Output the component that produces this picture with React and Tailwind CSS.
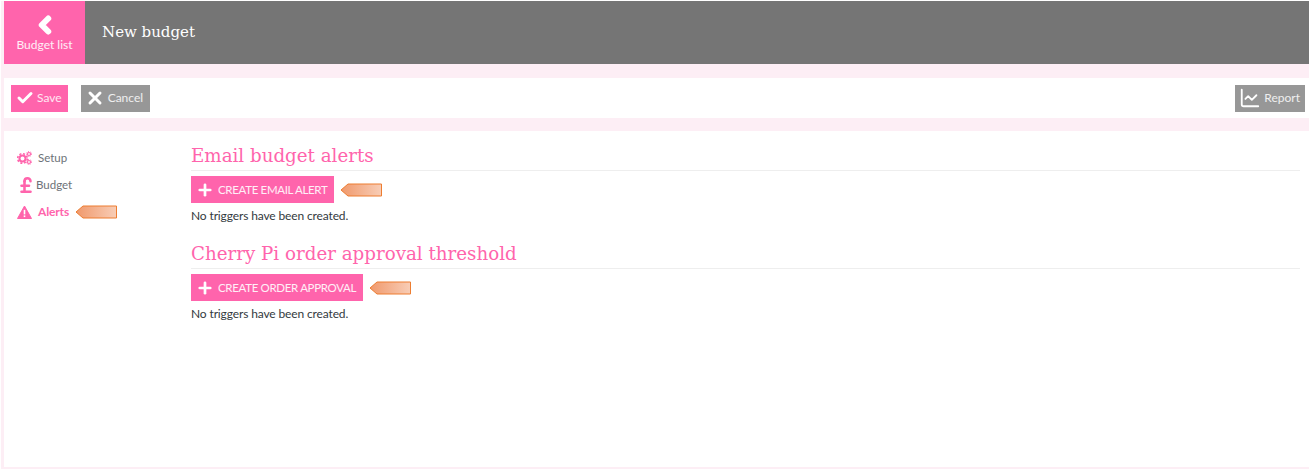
import React from "react";
import { Check, X, Plus, ChevronLeft, LineChart, PoundSterling } from "lucide-react";

const sans = "font-['Lato','Open_Sans',sans-serif]";
const slab = "font-['DejaVu_Serif',serif]";

function Arrow({ className = "" }) {
  return (
    <svg width="43" height="14" viewBox="0 0 43 14" className={className}>
      <defs>
        <linearGradient id="arrowFill" x1="0" x2="1" y1="0" y2="0">
          <stop offset="0" stopColor="#f0996c" />
          <stop offset="1" stopColor="#f8cdb6" />
        </linearGradient>
      </defs>
      <path d="M1 7 L8 1 H41.5 V13 H8 Z" fill="url(#arrowFill)" stroke="#ed7d31" strokeWidth="1" />
    </svg>
  );
}

function GearsIcon() {
  return (
    <svg width="15" height="14" viewBox="0 0 15 14" fill="none" stroke="#ff64ac">
      <circle cx="5.5" cy="7.5" r="3" strokeWidth="2" />
      <circle cx="5.5" cy="7.5" r="4.8" strokeWidth="1.6" strokeDasharray="2 1.77" />
      <circle cx="12" cy="3" r="1.5" strokeWidth="1.2" />
      <circle cx="12" cy="3" r="2.5" strokeWidth="1" strokeDasharray="1 1.1" />
      <circle cx="12" cy="11" r="1.5" strokeWidth="1.2" />
      <circle cx="12" cy="11" r="2.5" strokeWidth="1" strokeDasharray="1 1.1" />
    </svg>
  );
}

function WarningIcon() {
  return (
    <svg width="15" height="14" viewBox="0 0 15 14">
      <path d="M7.5 1 L14.5 13.5 H0.5 Z" fill="#ff64ac" stroke="#ff64ac" strokeWidth="1" strokeLinejoin="round" />
      <rect x="6.7" y="4.8" width="1.6" height="4.6" fill="#ffffff" />
      <rect x="6.7" y="10.4" width="1.6" height="1.7" fill="#ffffff" />
    </svg>
  );
}

function TopButton({ icon, label, pink, className = "" }) {
  return (
    <button className={`flex h-[27px] items-center gap-[3px] text-[12px] text-white/85 ${pink ? "bg-[#ff64ac]" : "bg-[#979797]"} ${className}`}>
      {icon}
      {label}
    </button>
  );
}

function AlertSection({ title, button }) {
  return (
    <section className="mb-[17px]">
      <h2 className={`${slab} border-b border-[#eeeeee] text-[18.25px] leading-[28px] text-[#ff64ac]`}>{title}</h2>
      <div className="mt-[5px] flex items-center gap-[6px]">
        <button className="flex h-[27px] items-center gap-[4px] bg-[#ff64ac] pl-[5px] pr-[7px] text-[11.5px] tracking-[-0.33px] text-white/90">
          <Plus size={18} strokeWidth={3.6} className="text-white" />
          {button}
        </button>
        <Arrow />
      </div>
      <p className="mt-[5px] text-[12px] leading-[15px] tracking-[-0.13px] text-[#333a40]">No triggers have been created.</p>
    </section>
  );
}

function App() {
  return (
    <div className={`${sans} h-[473px] w-[1313px] bg-white pb-[4px] pl-[1px] pr-[4px] pt-[1px]`}>
      <div className="flex h-[468px] flex-col bg-[#fdeef5] pb-[2px] pl-[3px]">
        <header className="flex h-[63px] items-center bg-[#757575]">
          <div className="flex h-full w-[81px] flex-col items-center justify-center bg-[#ff64ac] text-white">
            <ChevronLeft size={26} strokeWidth={5.5} className="-mr-[1px]" />
            <span className="-mt-[1px] text-[12px] leading-[16px] text-white/90">Budget list</span>
          </div>
          <h1 className={`${slab} ml-[17px] text-[15px] text-white`}>New budget</h1>
        </header>

        <div className="mt-[14px] flex h-[40px] items-center justify-between bg-white pl-[7px] pr-[4px]">
          <div className="flex gap-[13px]">
            <TopButton pink label="Save" className="pl-[5px] pr-[6px]" icon={<Check size={18} strokeWidth={4} className="text-white" />} />
            <TopButton label="Cancel" className="pl-[4px] pr-[7px]" icon={<X size={20} strokeWidth={3.6} className="text-white" />} />
          </div>
          <TopButton label="Report" className="pl-[4px] pr-[5px]" icon={<LineChart size={22} strokeWidth={2} className="text-white" />} />
        </div>

        <main className="mt-[13px] flex flex-1 bg-white">
          <nav className="flex w-[187px] flex-col gap-[9px] pl-[13px] pt-[18px] text-[11.5px]">
            <div className="flex h-[18px] items-center gap-[6px] text-[#6d7278]">
              <GearsIcon />
              Setup
            </div>
            <div className="flex h-[18px] items-center gap-[1px] text-[#6d7278]">
              <PoundSterling size={18} strokeWidth={3.4} className="text-[#ff64ac]" />
              Budget
            </div>
            <div className="flex h-[18px] items-center gap-[6px] text-[12px] font-bold tracking-[-0.15px] text-[#ff64ac]">
              <WarningIcon />
              Alerts
              <Arrow />
            </div>
          </nav>
          <div className="flex-1 pr-[9px] pt-[11px]">
            <AlertSection title="Email budget alerts" button="CREATE EMAIL ALERT" />
            <AlertSection title="Cherry Pi order approval threshold" button="CREATE ORDER APPROVAL" />
          </div>
        </main>
      </div>
    </div>
  );
}

export default App;
